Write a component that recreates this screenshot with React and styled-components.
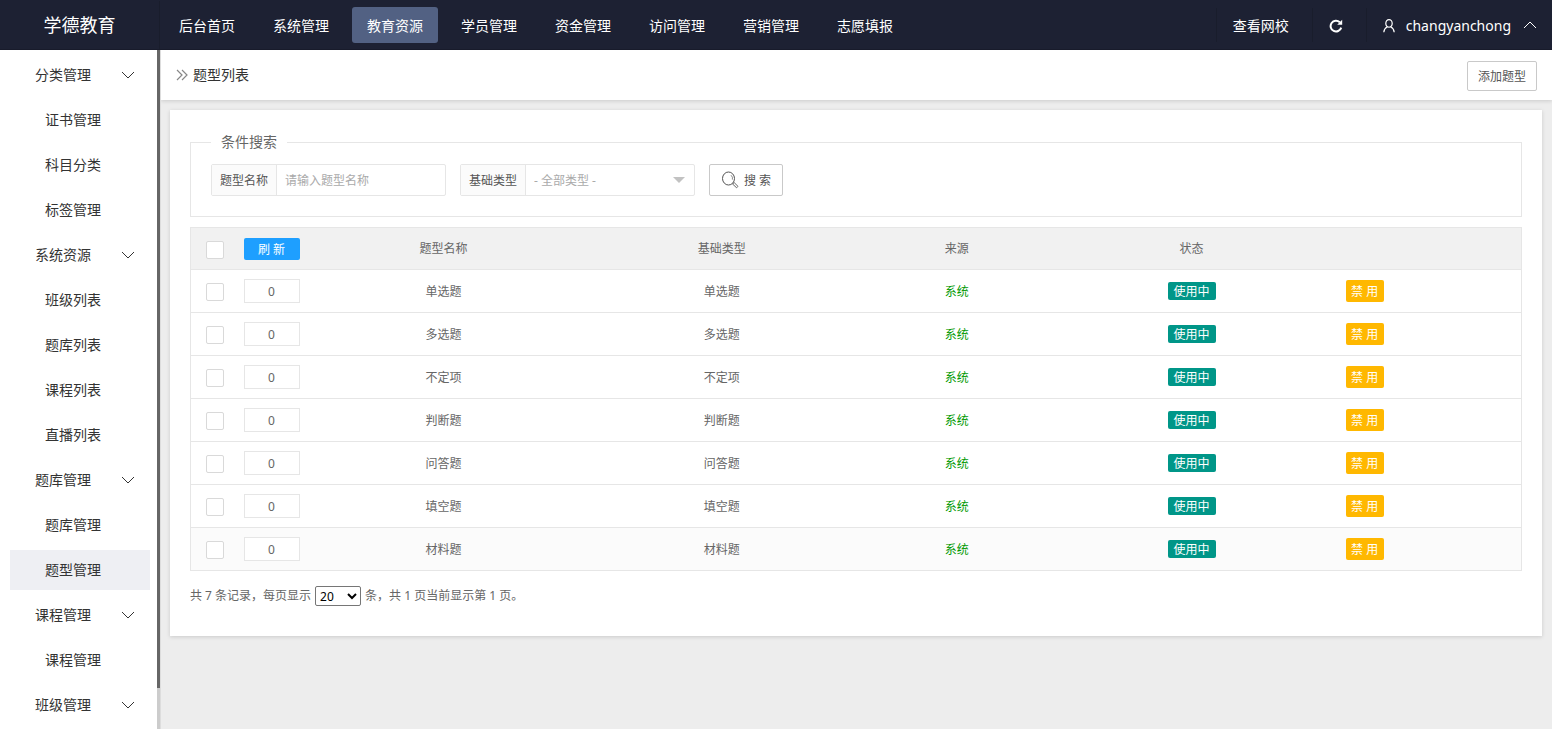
import React, { useState } from "react";
import styled, { createGlobalStyle } from "styled-components";

const navItems = ["后台首页", "系统管理", "教育资源", "学员管理", "资金管理", "访问管理", "营销管理", "志愿填报"];

const menu = [
    { title: "分类管理", children: ["证书管理", "科目分类", "标签管理"] },
    { title: "系统资源", children: ["班级列表", "题库列表", "课程列表", "直播列表"] },
    { title: "题库管理", children: ["题库管理", "题型管理"] },
    { title: "课程管理", children: ["课程管理"] },
    { title: "班级管理", children: [] },
];

const types = ["单选题", "多选题", "不定项", "判断题", "问答题", "填空题", "材料题"];

function Chevron({ up, size = 14 }) {
    return (
        <svg width={size} height={size} viewBox="0 0 14 14" fill="none" stroke="currentColor">
            <path d={up ? "M1 9 L7 3 L13 9" : "M1 4 L7 10 L13 4"} />
        </svg>
    );
}

function Header() {
    return (
        <TopBar>
            <Logo href="#">学德教育</Logo>
            <Nav>
                {navItems.map((item) => (
                    <NavLink key={item} href="#" $active={item === "教育资源"}>{item}</NavLink>
                ))}
            </Nav>
            <Tools>
                <Tool href="#" $width={96}>查看网校</Tool>
                <Tool href="#" $width={54} aria-label="刷新">
                    <svg width="14" height="14" viewBox="0 0 14 14" fill="none" stroke="currentColor" strokeWidth="2">
                        <path d="M12.2 8.6 A5.4 5.4 0 1 1 10.8 3.2" />
                        <path d="M13.2 0.8 V5.8 H8.2 Z" fill="currentColor" stroke="none" />
                    </svg>
                </Tool>
                <Tool href="#">
                    <svg width="12" height="14" viewBox="0 0 12 14" fill="none" stroke="currentColor" strokeWidth="1.2">
                        <ellipse cx="6" cy="4.4" rx="3.2" ry="3.8" />
                        <path d="M4.4 7.8 C2.4 8.8 1 10.4 0.8 13.2 M7.6 7.8 C9.6 8.8 11 10.4 11.2 13.2" />
                    </svg>
                    <UserName>changyanchong</UserName>
                    <Chevron up />
                </Tool>
            </Tools>
        </TopBar>
    );
}

function Sidebar() {
    return (
        <Side>
            <Menu>
                {menu.map((group) => (
                    <React.Fragment key={group.title}>
                        <GroupTitle type="button">
                            {group.title}
                            <Chevron />
                        </GroupTitle>
                        {group.children.map((child) => (
                            <MenuLink key={child} href="#" $active={child === "题型管理"}>{child}</MenuLink>
                        ))}
                    </React.Fragment>
                ))}
            </Menu>
            <Track>
                <Thumb />
            </Track>
        </Side>
    );
}

function SearchBox() {
    return (
        <SearchForm>
            <legend>条件搜索</legend>
            <Fields>
                <Field>
                    <label htmlFor="title">题型名称</label>
                    <input id="title" placeholder="请输入题型名称" />
                </Field>
                <Field $arrow>
                    <label htmlFor="base">基础类型</label>
                    <select id="base">
                        <option>- 全部类型 -</option>
                    </select>
                </Field>
                <SearchButton type="button">
                    <svg width="18" height="18" viewBox="0 0 18 18" fill="none" stroke="currentColor">
                        <ellipse cx="7.5" cy="7.5" rx="6" ry="6.5" />
                        <path d="M10 4.2 A4.4 4.4 0 0 1 11.4 8.6" strokeWidth="0.7" />
                        <path d="M11.6 13 L13.2 11.6 L17 15.4 L15.6 16.8 Z" strokeWidth="0.9" />
                    </svg>
                    <span>搜 索</span>
                </SearchButton>
            </Fields>
        </SearchForm>
    );
}

function TypeTable() {
    const [checked, setChecked] = useState([]);

    const toggle = (name) => {
        setChecked(checked.includes(name) ? checked.filter((item) => item !== name) : [...checked, name]);
    };

    return (
        <Table>
            <colgroup>
                <Col $width="48px" />
                <Col $width="66px" />
                <Col $width="20.9%" />
                <Col $width="20.9%" />
                <Col $width="14.4%" />
                <Col $width="20.9%" />
                <col />
            </colgroup>
            <thead>
                <tr>
                    <th>
                        <Check
                            type="checkbox"
                            aria-label="全选"
                            checked={checked.length === types.length}
                            onChange={(e) => setChecked(e.target.checked ? types : [])}
                        />
                    </th>
                    <th><Refresh type="button">刷 新</Refresh></th>
                    <th>题型名称</th>
                    <th>基础类型</th>
                    <th>来源</th>
                    <th>状态</th>
                    <th></th>
                </tr>
            </thead>
            <tbody>
                {types.map((name, i) => (
                    <Row key={name} $hover={i === types.length - 1}>
                        <td>
                            <Check type="checkbox" aria-label={name} checked={checked.includes(name)} onChange={() => toggle(name)} />
                        </td>
                        <td><Sort aria-label={`${name}排序`} defaultValue="0" /></td>
                        <TextCell>{name}</TextCell>
                        <TextCell>{name}</TextCell>
                        <TextCell $color="#090">系统</TextCell>
                        <td><Badge>使用中</Badge></td>
                        <td><Disable type="button">禁 用</Disable></td>
                    </Row>
                ))}
            </tbody>
        </Table>
    );
}

function App() {
    return (
        <Page>
            <GlobalStyle />
            <Header />
            <Body>
                <Sidebar />
                <Main>
                    <TitleBar>
                        <h1>
                            <svg width="12" height="12" viewBox="0 0 12 12" fill="none" stroke="#888" strokeWidth="1.2">
                                <path d="M1 1 L6 6 L1 11 M6 1 L11 6 L6 11" />
                            </svg>
                            题型列表
                        </h1>
                        <AddButton type="button">添加题型</AddButton>
                    </TitleBar>
                    <Card>
                        <SearchBox />
                        <TypeTable />
                        <Pager>
                            <span>共 7 条记录，每页显示</span>
                            <select aria-label="每页显示" defaultValue="20">
                                <option>20</option>
                                <option>50</option>
                                <option>100</option>
                            </select>
                            <span>条，共 1 页当前显示第 1 页。</span>
                        </Pager>
                    </Card>
                </Main>
            </Body>
        </Page>
    );
}

const GlobalStyle = createGlobalStyle`
    * {
        box-sizing: border-box;
    }
    body {
        margin: 0;
        background: #ededed;
        color: #666;
        font-family: "Noto Sans", "Noto Sans CJK SC", sans-serif;
        font-size: 12px;
        line-height: 20px;
    }
    button, input, select {
        font: inherit;
        color: inherit;
        margin: 0;
    }
    button {
        cursor: pointer;
    }
    a {
        text-decoration: none;
    }
`

const Page = styled.div`
    display: flex;
    flex-direction: column;
    height: 100vh;
    overflow: hidden;
`

const TopBar = styled.header`
    display: flex;
    align-items: center;
    flex: none;
    height: 50px;
    background: #1d2133;
    border-bottom: 1px solid #181b2b;
`

const Logo = styled.a`
    width: 160px;
    line-height: 48px;
    border-right: 1px solid #191d2c;
    color: white;
    font-size: 18px;
    text-align: center;
`

const Nav = styled.nav`
    display: flex;
    gap: 8px;
    padding-left: 4px;
`

const NavLink = styled.a`
    padding: 2px 15px 0;
    border-radius: 3px;
    background: ${(props) => (props.$active ? "#526183" : "transparent")};
    color: white;
    font-size: 14px;
    line-height: 34px;
    white-space: nowrap;
`

const Tools = styled.div`
    display: flex;
    margin-left: auto;
`

const Tool = styled.a`
    display: flex;
    align-items: center;
    width: ${(props) => (props.$width ? `${props.$width}px` : "auto")};
    height: 34px;
    padding: 2px 15px 0 16px;
    border-left: 1px solid #191d2c;
    color: white;
    font-size: 14px;
    white-space: nowrap;
`

const UserName = styled.span`
    margin: 0 12px 0 11px;
`

const Body = styled.div`
    display: flex;
    flex: 1;
    min-height: 0;
`

const Side = styled.aside`
    display: flex;
    flex: none;
    width: 161px;
    overflow: hidden;
    background: white;
    border-right: 1px solid #ddd;
`

const Menu = styled.nav`
    display: flex;
    flex-direction: column;
    flex: 1;
    gap: 5px;
    padding: 5px 7px 5px 10px;
`

const GroupTitle = styled.button`
    display: flex;
    align-items: center;
    justify-content: space-between;
    flex: none;
    height: 40px;
    padding: 0 15px 0 25px;
    border: 0;
    background: none;
    color: #333;
    font-size: 14px;
`

const MenuLink = styled.a`
    flex: none;
    height: 40px;
    padding-left: 35px;
    background: ${(props) => (props.$active ? "#eeeff3" : "transparent")};
    color: #333;
    font-size: 14px;
    line-height: 40px;
`

const Track = styled.div`
    width: 3px;
    background: #ccc;
`

const Thumb = styled.div`
    height: 94%;
    background: #666;
`

const Main = styled.main`
    flex: 1;
    min-width: 0;
    overflow: auto;
`

const TitleBar = styled.div`
    display: flex;
    align-items: center;
    justify-content: space-between;
    height: 50px;
    padding: 0 15px;
    background: white;
    box-shadow: 0 1px 4px rgba(0, 0, 0, 0.15);

    h1 {
        display: flex;
        align-items: center;
        gap: 5px;
        margin: 0;
        color: #333;
        font-size: 14px;
        font-weight: 400;
    }
`

const AddButton = styled.button`
    height: 30px;
    margin-top: 2px;
    padding: 2px 10px 0;
    border: 1px solid #c9c9c9;
    border-radius: 2px;
    background: white;
    color: #555;
`

const Card = styled.section`
    margin: 10px 10px 10px 9px;
    padding: 22px 20px 30px;
    background: white;
    box-shadow: 0 1px 4px rgba(0, 0, 0, 0.15);
`

const SearchForm = styled.fieldset`
    margin: 0;
    padding: 12px 20px 20px;
    border: 1px solid #e6e6e6;

    legend {
        padding: 0 10px;
        font-size: 14px;
    }
`

const Fields = styled.div`
    display: flex;
    gap: 14px;
`

const Field = styled.div`
    position: relative;
    display: flex;
    width: 235px;
    height: 32px;
    border: 1px solid #e6e6e6;
    border-radius: 2px;

    label {
        flex: none;
        width: 65px;
        border-right: 1px solid #e6e6e6;
        background: #fbfbfb;
        color: #555;
        line-height: 32px;
        text-align: center;
    }
    input, select {
        flex: 1;
        min-width: 0;
        padding: 2px 8px 0;
        border: 0;
        outline: 0;
        appearance: none;
        background: none;
        color: #aaa;
    }
    input::placeholder {
        color: #aaa;
    }
    &::after {
        content: "";
        display: ${(props) => (props.$arrow ? "block" : "none")};
        position: absolute;
        top: 12px;
        right: 9px;
        border: 6px solid transparent;
        border-top-color: #c2c2c2;
        border-bottom: 0;
        pointer-events: none;
    }
`

const SearchButton = styled.button`
    display: flex;
    align-items: center;
    justify-content: center;
    gap: 5px;
    width: 74px;
    height: 32px;
    padding: 0;
    border: 1px solid #c9c9c9;
    border-radius: 2px;
    background: white;
    color: #555;
    white-space: nowrap;

    span {
        padding-top: 2px;
    }
`

const Table = styled.table`
    width: 100%;
    margin-top: 10px;
    border: 1px solid #e6e6e6;
    border-collapse: collapse;
    table-layout: fixed;

    tr {
        height: 43px;
        border-bottom: 1px solid #e6e6e6;
    }
    thead tr {
        height: 42px;
    }
    th, td {
        padding: 0;
        font-weight: 400;
        text-align: center;
    }
    th {
        background: #f1f1f1;
    }
    td:last-child {
        padding-left: 15px;
        text-align: left;
    }
`

const Col = styled.col`
    width: ${(props) => props.$width};
`

const Row = styled.tr`
    background: ${(props) => (props.$hover ? "#fbfbfb" : "white")};
`

const TextCell = styled.td`
    && {
        padding-top: 2px;
    }
    color: ${(props) => props.$color || "inherit"};
`

const Check = styled.input`
    display: block;
    width: 18px;
    height: 18px;
    margin: 2px auto 0;
    border: 1px solid #d9d9d9;
    border-radius: 2px;
    appearance: none;
    background: white;

    &:checked {
        background: #1e9fff;
    }
`

const Refresh = styled.button`
    display: block;
    width: 56px;
    height: 22px;
    margin: 0 auto;
    padding: 2px 0 0;
    border: 0;
    border-radius: 2px;
    background: #1e9fff;
    color: white;
`

const Sort = styled.input`
    display: block;
    width: 56px;
    height: 24px;
    margin: 0 auto;
    padding: 0;
    border: 1px solid #e6e6e6;
    background: white;
    text-align: center;
`

const Badge = styled.span`
    display: block;
    width: 48px;
    height: 18px;
    margin: 0 auto;
    border-radius: 2px;
    background: #009688;
    color: white;
    line-height: 20px;
`

const Disable = styled.button`
    display: block;
    width: 38px;
    height: 22px;
    padding: 2px 0 0;
    border: 0;
    border-radius: 2px;
    background: #ffb800;
    color: white;
`

const Pager = styled.div`
    display: flex;
    align-items: center;
    gap: 4px;
    margin-top: 15px;

    span {
        line-height: 20px;
    }
    select {
        width: 46px;
        height: 20px;
        padding: 0;
        border: 1px solid #767676;
        border-radius: 2px;
        background: white;
        color: black;
    }
`

export default App
